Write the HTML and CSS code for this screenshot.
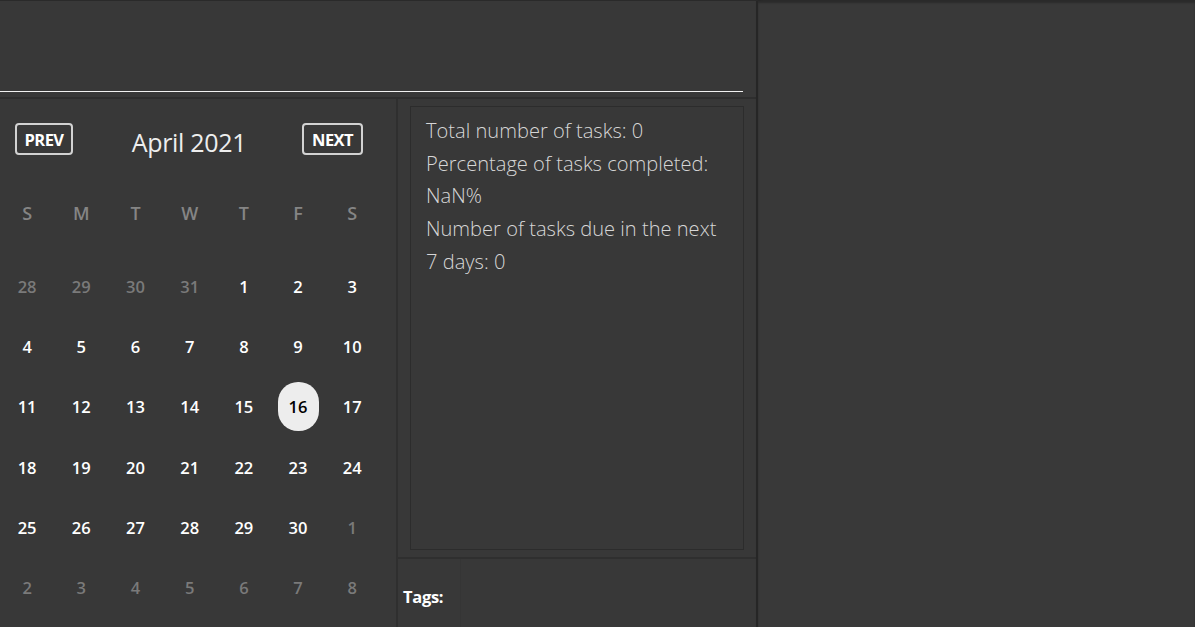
FILE: index.html
```html
<!DOCTYPE html>
<html>
<head>
<meta charset="utf-8">
<link rel="stylesheet" href="styles.css">
</head>
<body>
<div class="app">
  <div class="main">
    <div class="header"><div class="header-line"></div></div>
    <div class="content">
      <div class="calendar">
        <div class="cal-nav">
          <button class="nav-btn prev">PREV</button>
          <div class="month">April 2021</div>
          <button class="nav-btn next">NEXT</button>
        </div>
        <div class="grid heads">
          <div>S</div><div>M</div><div>T</div><div>W</div><div>T</div><div>F</div><div>S</div>
        </div>
        <div class="grid days">
          <div class="d other">28</div><div class="d other">29</div><div class="d other">30</div><div class="d other">31</div><div class="d">1</div><div class="d">2</div><div class="d">3</div>
          <div class="d">4</div><div class="d">5</div><div class="d">6</div><div class="d">7</div><div class="d">8</div><div class="d">9</div><div class="d">10</div>
          <div class="d">11</div><div class="d">12</div><div class="d">13</div><div class="d">14</div><div class="d">15</div><div class="d"><span class="today">16</span></div><div class="d">17</div>
          <div class="d">18</div><div class="d">19</div><div class="d">20</div><div class="d">21</div><div class="d">22</div><div class="d">23</div><div class="d">24</div>
          <div class="d">25</div><div class="d">26</div><div class="d">27</div><div class="d">28</div><div class="d">29</div><div class="d">30</div><div class="d other">1</div>
          <div class="d other">2</div><div class="d other">3</div><div class="d other">4</div><div class="d other">5</div><div class="d other">6</div><div class="d other">7</div><div class="d other">8</div>
        </div>
      </div>
      <div class="side-col">
        <div class="stats-wrap">
          <div class="stats">
            <p>Total number of tasks: 0</p>
            <p>Percentage of tasks completed: NaN%</p>
            <p>Number of tasks due in the next 7 days: 0</p>
          </div>
        </div>
        <div class="tags"><span class="tags-label">Tags:</span><div class="tags-list"></div></div>
      </div>
    </div>
  </div>
  <div class="divider"></div>
  <div class="side"></div>
</div>
</body>
</html>
```

FILE: styles.css
```css
html, body {
  margin: 0;
  padding: 0;
  height: 100%;
  background: #383838;
  overflow: hidden;
}
body {
  font-family: "Open Sans", "Noto Sans", sans-serif;
  color: #eee;
}
.app {
  display: flex;
  height: 627px;
  border-top: 1px solid #2a2a2a;
  box-sizing: border-box;
}
.main {
  width: 756px;
  display: flex;
  flex-direction: column;
}
.divider {
  width: 2px;
  background: #262626;
  box-shadow: 2px 0 3px rgba(0,0,0,0.35);
}
.side {
  flex: 1;
  background: #393939;
  box-shadow: inset 0 2px 2px rgba(0,0,0,0.25);
}
.header {
  height: 96px;
  border-bottom: 2px solid #2e2e2e;
  padding-right: 13px;
}
.header-line {
  margin-top: 90px;
  height: 1px;
  background: #f2f2f2;
}
.content {
  flex: 1;
  display: flex;
}
.calendar {
  width: 396px;
  border-right: 2px solid #2f2f2f;
}
.cal-nav {
  display: flex;
  align-items: center;
  justify-content: space-between;
  width: 348px;
  margin: 24px 0 0 15px;
  height: 32px;
}
.nav-btn {
  height: 32px;
  background: transparent;
  border: 2px solid #d2d2d2;
  border-radius: 4px;
  color: #fff;
  font-family: "Open Sans", sans-serif;
  font-weight: 700;
  font-size: 16.5px;
  padding: 0;
  letter-spacing: -0.6px;
}
.prev { width: 58px; }
.next { width: 61px; }
.month {
  font-size: 25px;
  color: #eee;
  padding-top: 5px;
  padding-left: 3px;
  letter-spacing: -0.3px;
}
.grid {
  display: grid;
  grid-template-columns: repeat(7, 54.2px);
  text-align: center;
}
.heads {
  margin-top: 28px;
  height: 60px;
  align-items: center;
  color: #858585;
  font-size: 18px;
  font-weight: 600;
}
.days {
  margin-top: 13px;
  grid-auto-rows: 60.3px;
  font-weight: 600;
  font-size: 16.5px;
  color: #fff;
}
.d {
  display: flex;
  align-items: center;
  justify-content: center;
}
.d.other {
  color: #7a7a7a;
}
.today {
  display: flex;
  align-items: center;
  justify-content: center;
  width: 41px;
  height: 49px;
  border-radius: 20px;
  background: #ededed;
  color: #000;
}
.side-col {
  flex: 1;
  display: flex;
  flex-direction: column;
}
.stats-wrap {
  height: 460px;
  padding: 7px 12px 0 12px;
  box-sizing: border-box;
  border-bottom: 2px solid #2f2f2f;
}
.stats {
  height: 444px;
  border: 1px solid #2c2c2c;
  box-sizing: border-box;
  padding: 8px 16px 8px 15px;
  color: #d6d6d6;
  font-weight: 300;
  font-size: 20.1px;
  line-height: 32.7px;
}
.stats p {
  margin: 0;
}
.tags {
  flex: 1;
  display: flex;
  align-items: center;
  padding-left: 5px;
}
.tags-label {
  font-weight: 700;
  font-size: 16.5px;
  color: #fff;
  width: 57px;
  padding-top: 7px;
  letter-spacing: -0.3px;
}
.tags-list {
  align-self: stretch;
  flex: 1;
  border-left: 1px solid #353535;
}
```
